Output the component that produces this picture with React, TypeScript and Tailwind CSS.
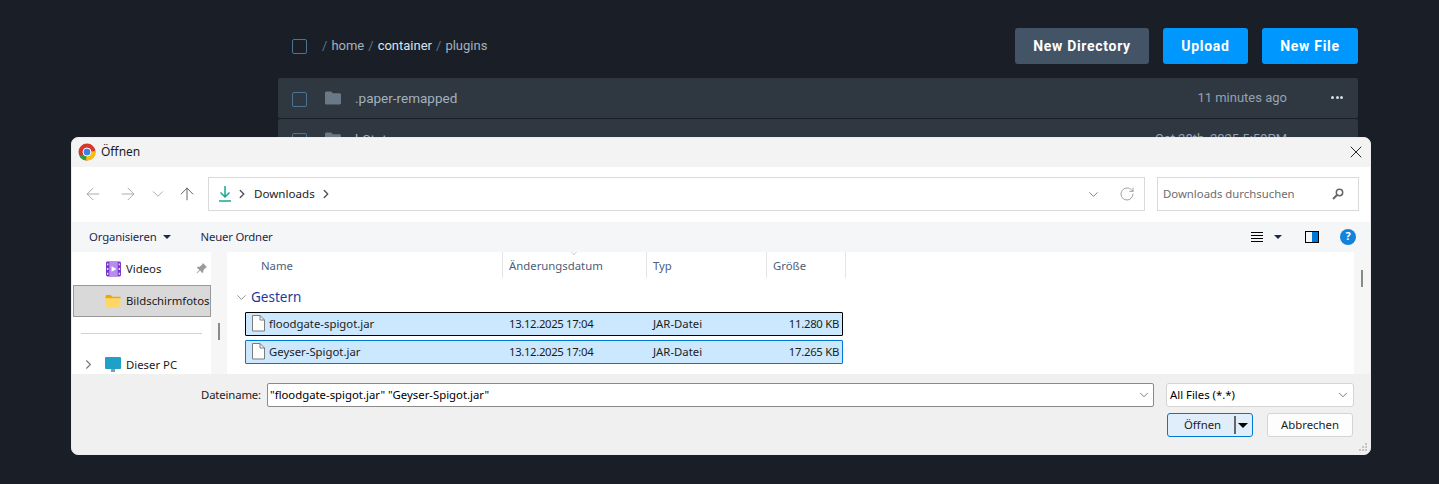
import { ArrowLeft, ArrowRight, ArrowUp, ChevronDown, ChevronRight, RotateCw, X } from "lucide-react";

const tableCols = "grid grid-cols-[257px_144px_120px_75px]";

function Checkbox() {
  return <div className="w-[15px] h-[15px] rounded-[2px] border border-[#4a7490] shrink-0" />;
}

function FolderIcon({ className }: { className?: string }) {
  return (
    <svg viewBox="0 0 16 14" className={className} fill="#6b7885">
      <path d="M1.5 0.5h4.6l1.7 1.8h6.7c.8 0 1.5.7 1.5 1.5v8.2c0 .8-.7 1.5-1.5 1.5h-13C.7 13.5 0 12.8 0 12V2C0 1.2.7.5 1.500.5z" />
    </svg>
  );
}

function FileRow({ name, time }: { name: string; time: string }) {
  return (
    <div className="flex items-center h-[40px] pl-[14px] pr-[15px] pt-[2px] bg-[#2f3741] rounded-[2px]">
      <Checkbox />
      <FolderIcon className="w-[16px] h-[14px] ml-[18px] -mt-[3px]" />
      <span className="ml-[14px] text-[13.5px] text-[#a3b1bf] -mt-[2px]">{name}</span>
      <span className="ml-auto text-[13px] text-[#94a3b3] -mt-[2px]">{time}</span>
      <span className="ml-[44px] flex gap-[1.5px] -mt-[3px]">
        <i className="w-[3px] h-[3px] rounded-full bg-[#d5dce3]" />
        <i className="w-[3px] h-[3px] rounded-full bg-[#d5dce3]" />
        <i className="w-[3px] h-[3px] rounded-full bg-[#d5dce3]" />
      </span>
    </div>
  );
}

function DocIcon() {
  return (
    <svg viewBox="0 0 14 17" className="w-[14px] h-[17px] shrink-0" fill="#fdfdfd" stroke="#7c7c7c" strokeWidth="1">
      <path d="M1.5 .5h7.5l4.5 4.5v11H1.5z" />
      <path d="M9 .5v4.5h4.5" fill="none" />
    </svg>
  );
}

function SelectedRow({ name, size, focus }: { name: string; size: string; focus?: boolean }) {
  return (
    <div
      className={`${tableCols} w-[598px] h-[24px] items-center bg-[#cce8ff] border rounded-[1px] ${focus ? "border-[#000000]" : "border-[#0078d7]"}`}
    >
      <div className="flex items-center gap-[4px] pl-[5px]">
        <DocIcon />
        <span>{name}</span>
      </div>
      <div className="pl-[6px] tracking-[-0.35px]">13.12.2025 17:04</div>
      <div className="pl-[6px]">JAR-Datei</div>
      <div className="text-right pr-[3px] tracking-[-0.3px]">{size}</div>
    </div>
  );
}

function OpenDialog() {
  return (
    <div className="absolute left-[71px] top-[137px] w-[1300px] h-[318px] rounded-[7px] overflow-hidden bg-[#f0f0f0] border border-[#ececec] flex flex-col text-[11.35px] text-[#1c1c1c] font-['Noto_Sans','Open_Sans',sans-serif]">
      {/* title bar */}
      <div className="h-[29px] bg-[#f3f3f3] flex items-center pl-[6px] pr-[4px] pb-[2px] shrink-0">
        <svg viewBox="0 0 18 18" className="w-[18px] h-[18px]">
          <circle cx="9" cy="9" r="8.500" fill="#d8362a" />
          <path d="M9 9L1.500 13.500a8.500 8.500 0 0 0 6.500 4z" fill="#2f9e44" />
          <path d="M9 9l-1 8.500a8.500 8.500 0 0 0 9.500-9.500z" fill="#f4c20d" />
          <circle cx="9" cy="9" r="4" fill="#3f7fe8" stroke="#fff" strokeWidth="1" />
        </svg>
        <span className="ml-[5px] text-[12px]">Öffnen</span>
        <X className="ml-auto w-[20px] h-[20px] text-[#111]" strokeWidth={1.1} />
      </div>

      {/* address row */}
      <div className="h-[55px] bg-white flex items-center pl-[11px] pr-[11px] pb-[1px] shrink-0">
        <ArrowLeft className="w-[20px] h-[20px] text-[#a4a4a4]" strokeWidth={1.1} />
        <ArrowRight className="ml-[15px] w-[20px] h-[20px] text-[#a4a4a4]" strokeWidth={1.1} />
        <ChevronDown className="ml-[11px] w-[18px] h-[18px] text-[#a4a4a4]" strokeWidth={1.2} />
        <ArrowUp className="ml-[10px] w-[20px] h-[20px] text-[#555]" strokeWidth={1.1} />
        <div className="ml-[11px] w-[937px] h-[34px] border border-[#d9d9d9] flex items-center pl-[10px] pr-[9px]">
          <svg viewBox="0 0 12 16" className="w-[12px] h-[16px]" fill="none" stroke="#1aa88f" strokeWidth="1.5">
            <path d="M6 0v11M1.500 6.500L6 11l4.500-4.500M0 15h12" />
          </svg>
          <ChevronRight className="ml-[4px] w-[14px] h-[14px] text-[#555]" strokeWidth={2.4} />
          <span className="ml-[5px] text-[11.6px]">Downloads</span>
          <ChevronRight className="ml-[4px] w-[14px] h-[14px] text-[#555]" strokeWidth={2.4} />
          <ChevronDown className="ml-auto w-[15px] h-[15px] text-[#666]" strokeWidth={1.3} />
          <RotateCw className="ml-[18px] w-[16px] h-[16px] text-[#8a8a8a]" strokeWidth={1.2} />
        </div>
        <div className="ml-[12px] w-[202px] h-[34px] border border-[#d9d9d9] flex items-center pl-[5px] pr-[14px] text-[#6d6d6d]">
          <span>Downloads durchsuchen</span>
          <svg viewBox="0 0 12 12" className="ml-auto w-[12px] h-[12px]" fill="none" stroke="#666" strokeWidth="1.5">
            <circle cx="7.5" cy="4.5" r="3.2" />
            <path d="M5 7L1 11" strokeWidth="2" />
          </svg>
        </div>
      </div>

      {/* command bar */}
      <div className="h-[30px] bg-[#f5f6f7] flex items-center pl-[17px] pr-[14px] pb-[1px] shrink-0 text-[#1e2a4a]">
        <span className="tracking-[-0.15px]">Organisieren</span>
        <i className="ml-[6px] w-0 h-0 border-x-[4px] border-x-transparent border-t-[4px] border-t-[#1e2a4a]" />
        <span className="ml-[30px] tracking-[-0.2px]">Neuer Ordner</span>
        <div className="ml-auto flex flex-col gap-[2px]">
          <i className="block w-[12px] h-[1px] bg-black" />
          <i className="block w-[12px] h-[1px] bg-black" />
          <i className="block w-[12px] h-[1px] bg-black" />
          <i className="block w-[12px] h-[1px] bg-black" />
        </div>
        <i className="ml-[11px] w-0 h-0 border-x-[4px] border-x-transparent border-t-[4px] border-t-[#1e2a4a]" />
        <div className="ml-[23px] w-[14px] h-[12px] border border-black flex justify-end">
          <i className="block w-[6px] h-full bg-[#0078d7]" />
        </div>
        <div className="ml-[21px] w-[16px] h-[16px] rounded-full bg-[#1283d8] text-white text-[11px] font-bold flex items-center justify-center">?</div>
      </div>

      {/* body */}
      <div className="h-[122px] bg-white flex shrink-0 overflow-hidden">
        <div className="w-[139px] shrink-0 pl-[1px] flex flex-col text-[#1a1a1a]">
          <div className="h-[33px] flex items-center pl-[33px] pr-[4px]">
            <svg viewBox="0 0 16 16" className="w-[15px] h-[16px]">
              <rect width="16" height="16" rx="1.5" fill="#7a35c9" />
              <rect x="3.500" y="0" width="9" height="16" fill="#b58df0" />
              <path d="M6 5l5 3-5 3z" fill="#fff" />
              <path d="M1 2h1.500v2H1zM1 7h1.500v2H1zM1 12h1.500v2H1zM13.500 2H15v2h-1.500zM13.500 7H15v2h-1.500zM13.500 12H15v2h-1.500z" fill="#e6d9fb" />
            </svg>
            <span className="ml-[5px]">Videos</span>
            <svg viewBox="0 0 12 12" className="ml-auto w-[11px] h-[11px]" fill="#9a9a9a">
              <path d="M7.500 0L12 4.500l-1.500.7-2.500 2.800v2L6.800 11 4.500 8.300 1 11.500.500 11l3.200-3.500L1 5.200 2 4h2l2.800-2.500z" />
            </svg>
          </div>
          <div className="h-[32px] bg-[#d9d9d9] border border-[#999] flex items-center pl-[31px] overflow-hidden whitespace-nowrap">
            <svg viewBox="0 0 16 14" className="w-[16px] h-[13px] shrink-0">
              <path d="M0 1.5C0 .7.7 0 1.500 0h4l2 2H16v2H0z" fill="#f0a800" />
              <path d="M0 3.500h16V12.500c0 .8-.7 1.500-1.500 1.500h-13C.7 14 0 13.300 0 12.500z" fill="#ffd766" />
            </svg>
            <span className="ml-[5px]">Bildschirmfotos</span>
          </div>
          <div className="mt-[16px] ml-[8px] w-[121px] h-px bg-[#d2d2d2]" />
          <div className="mt-[22px] flex items-center pl-[8px]">
            <ChevronRight className="w-[15px] h-[15px] text-[#777]" strokeWidth={1.8} />
            <svg viewBox="0 0 16 16" className="ml-[9px] w-[16px] h-[16px]">
              <rect y="0" width="16" height="12" rx="1" fill="#1fa0c8" />
              <rect x="6" y="12" width="4" height="3" fill="#8a9aa5" />
            </svg>
            <span className="ml-[5px]">Dieser PC</span>
          </div>
        </div>

        <div className="w-[16px] shrink-0 bg-[#f6f6f6] flex justify-center pt-[71px]">
          <i className="block w-[2px] h-[17px] bg-[#8a8a8a]" />
        </div>

        <div className="flex-1 pl-[18px] min-w-0">
          <div className="grid grid-cols-[257px_144px_120px_80px] w-[602px] h-[26px] items-center text-[#4c607a] relative">
            <div className="pl-[16px] pt-[2px]">Name</div>
            <div className="pl-[6px] pt-[2px] h-full flex items-center border-l border-[#e5e5e5]">Änderungsdatum</div>
            <div className="pl-[6px] pt-[2px] h-full flex items-center border-l border-[#e5e5e5]">Typ</div>
            <div className="pl-[6px] pt-[2px] h-full flex items-center border-x border-[#e5e5e5]">Größe</div>
            <ChevronDown className="absolute left-[322px] -top-[3px] w-[14px] h-[9px] text-[#888]" strokeWidth={1.3} />
          </div>
          <div className="h-[34px] flex items-center -ml-[11px] text-[13.5px] text-[#1b3a9e] pt-[4px]">
            <ChevronDown className="w-[15px] h-[15px] text-[#777]" strokeWidth={1.3} />
            <span className="ml-[2px]">Gestern</span>
          </div>
          <div className="flex flex-col gap-[4px]">
            <SelectedRow name="floodgate-spigot.jar" size="11.280 KB" focus />
            <SelectedRow name="Geyser-Spigot.jar" size="17.265 KB" />
          </div>
        </div>

        <div className="w-[16px] shrink-0 bg-[#f6f6f6] flex justify-center pt-[18px]">
          <i className="block w-[2px] h-[17px] bg-[#8a8a8a]" />
        </div>
      </div>

      {/* footer */}
      <div className="flex-1 bg-[#f0f0f0] relative pt-[9px] pl-[129px] pr-[16px]">
        <div className="flex items-center h-[24px]">
          <span className="w-[66px] shrink-0 tracking-[-0.15px]">Dateiname:</span>
          <div className="w-[887px] h-[24px] bg-white border border-[#8a8a8a] rounded-[2px] flex items-center pl-[2px] pr-[2px] text-black">
            <span>"floodgate-spigot.jar" "Geyser-Spigot.jar"</span>
            <ChevronDown className="ml-auto w-[14px] h-[14px] text-[#555]" strokeWidth={1.3} />
          </div>
          <div className="ml-[12px] flex-1 h-[24px] bg-white border border-[#d4d4d4] rounded-[3px] flex items-center pl-[3px] pr-[3px] text-black">
            <span>All Files (*.*)</span>
            <ChevronDown className="ml-auto w-[14px] h-[14px] text-[#555]" strokeWidth={1.3} />
          </div>
        </div>
        <div className="mt-[6px] flex justify-end gap-[14px] pr-[1px]">
          <div className="w-[86px] h-[24px] bg-[#e0eefb] border border-[#0078d4] rounded-[3px] flex items-center pl-[16px] pr-[3px]">
            <span>Öffnen</span>
            <i className="ml-auto block w-[2px] h-[18px] bg-[#666]" />
            <i className="ml-[2px] mr-[1px] w-0 h-0 border-x-[5px] border-x-transparent border-t-[5px] border-t-black" />
          </div>
          <div className="w-[86px] h-[24px] bg-[#fdfdfd] border border-[#d4d4d4] rounded-[3px] flex items-center justify-center">
            Abbrechen
          </div>
        </div>
        {/* resize grip */}
        <svg viewBox="0 0 9 9" className="absolute right-[2px] bottom-[2px] w-[9px] h-[9px]" fill="#c4c4c4">
          <path d="M6 0h2v2H6zM3 3h2v2H3zM6 3h2v2H6zM0 6h2v2H0zM3 6h2v2H3zM6 6h2v2H6z" />
        </svg>
      </div>
    </div>
  );
}

export default function App() {
  return (
    <div className="relative w-[1439px] h-[484px] overflow-hidden bg-[#1a1f27] font-['Roboto','Noto_Sans',sans-serif]">
      <div className="w-[1080px] ml-[278px] pt-[28px]">
        <div className="flex items-center h-[36px]">
          <div className="ml-[14px]">
            <Checkbox />
          </div>
          <div className="ml-[15px] text-[13px] text-[#a3b1bf] flex gap-[4px]">
            <span className="text-[#5e7386]">/</span>
            <span>home</span>
            <span className="text-[#5e7386]">/</span>
            <span className="text-[#dde3ea]">container</span>
            <span className="text-[#5e7386]">/</span>
            <span>plugins</span>
          </div>
          <div className="ml-auto flex gap-[14px] text-[14px] font-bold tracking-[0.7px] text-white">
            <button className="w-[134px] h-[36px] rounded-[3px] bg-[#435466]">New Directory</button>
            <button className="w-[85px] h-[36px] rounded-[3px] bg-[#0098ff]">Upload</button>
            <button className="w-[96px] h-[36px] rounded-[3px] bg-[#0098ff]">New File</button>
          </div>
        </div>
        <div className="mt-[14px] flex flex-col gap-px">
          <FileRow name=".paper-remapped" time="11 minutes ago" />
          <FileRow name="bStats" time="Oct 28th, 2025 5:59PM" />
        </div>
      </div>
      <OpenDialog />
    </div>
  );
}
